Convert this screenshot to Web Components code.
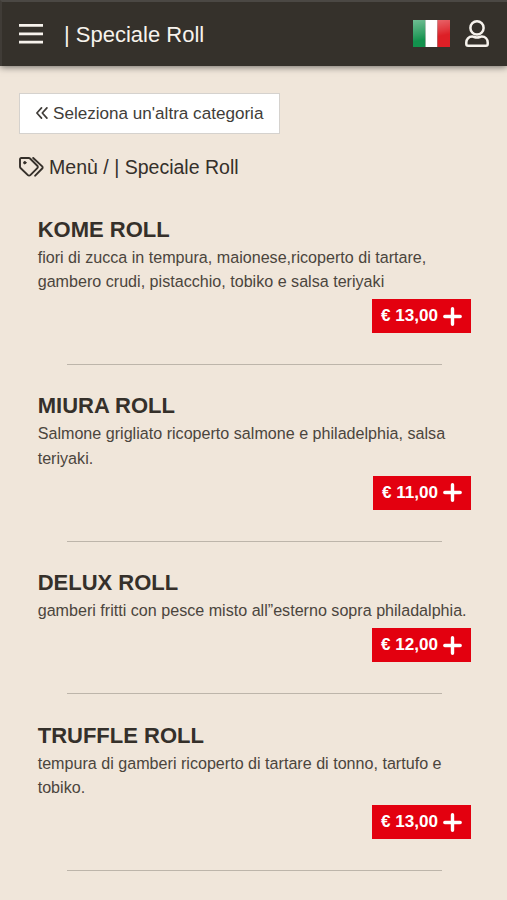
<!DOCTYPE html>
<html lang="it">
<head>
<meta charset="UTF-8">
<meta name="viewport" content="width=device-width, initial-scale=1">
<title>Speciale Roll</title>
<style>
    body {
        margin: 0;
        height: 900px;
        overflow: hidden;
        background: #f0e6da;
        color: #35302a;
        font-family: "Liberation Sans", Arial, sans-serif;
        --dark: #35312b;
        --accent: #e3000f;
    }
</style>
</head>
<body>
<menu-header>| Speciale Roll</menu-header>
<menu-page>
    <back-button slot="nav">Seleziona un'altra categoria</back-button>
    <menu-breadcrumb slot="nav">Menù / | Speciale Roll</menu-breadcrumb>
    <menu-item name="KOME ROLL" price="13,00">fiori di zucca in tempura, maionese,ricoperto di tartare, gambero crudi, pistacchio, tobiko e salsa teriyaki</menu-item>
    <menu-item name="MIURA ROLL" price="11,00">Salmone grigliato ricoperto salmone e philadelphia, salsa teriyaki.</menu-item>
    <menu-item name="DELUX ROLL" price="12,00">gamberi fritti con pesce misto all”esterno sopra philadalphia.</menu-item>
    <menu-item name="TRUFFLE ROLL" price="13,00">tempura di gamberi ricoperto di tartare di tonno, tartufo e tobiko.</menu-item>
</menu-page>

<script>
class MenuHeader extends HTMLElement {
    constructor() {
        super();
        this.attachShadow({ mode: 'open' });
    }

    connectedCallback() {
        this.shadowRoot.innerHTML = `
            <style>
                :host {
                    display: flex;
                    align-items: center;
                    box-sizing: border-box;
                    height: 66px;
                    padding: 0 18px 0 17px;
                    background: var(--dark);
                    border-top: 2px solid #4b4844;
                    border-left: 2px solid #403c37;
                    box-shadow: 0 1px 7px rgba(0, 0, 0, 0.55);
                    color: #f7f3ed;
                    font-size: 22px;
                }

                svg {
                    display: block;
                    flex: none;
                }

                .title {
                    flex: 1;
                    margin-left: 21px;
                    padding-top: 1px;
                    line-height: 26px;
                    white-space: nowrap;
                }

                .flag {
                    margin-top: -1px;
                }

                .user {
                    margin-left: 15px;
                    margin-top: -1px;
                }
            </style>
            <svg width="24" height="20" viewBox="0 0 24 20" fill="#f7f3ed">
                <path d="M0 0h24v2.8H0zM0 8.4h24v2.8H0zM0 16.8h24v2.8H0z"/>
            </svg>
            <div class="title"><slot></slot></div>
            <svg class="flag" width="37" height="27" viewBox="0 0 37 27">
                <defs>
                    <linearGradient id="shine" x1="0" y1="0" x2=".3" y2="1">
                        <stop offset="0" stop-color="#fff" stop-opacity=".4"/>
                        <stop offset=".55" stop-color="#fff" stop-opacity=".12"/>
                        <stop offset=".75" stop-color="#fff" stop-opacity="0"/>
                    </linearGradient>
                </defs>
                <path fill="#12924d" d="M0 0h12.5v27H0z"/>
                <path fill="#fff" d="M12.5 0h12v27h-12z"/>
                <path fill="#dd1f26" d="M24.5 0H37v27H24.5z"/>
                <path fill="url(#shine)" d="M0 0h37v27H0z"/>
            </svg>
            <svg class="user" width="24" height="27" viewBox="0 0 24 27" fill="none" stroke="#f7f3ed" stroke-width="2.5" stroke-linejoin="round">
                <circle cx="12" cy="7.9" r="6.6"/>
                <path d="M7.3 16.6C3.6 16.6 1.3 19.300 1.3 22.6v1.300c0 1.100.8 1.800 1.800 1.800h17.800c1 0 1.800-.7 1.800-1.800v-1.300c0-3.300-2.300-6-6-6-1.600 0-2.300 1-4.700 1s-3.100-1-4.700-1z"/>
            </svg>
        `;
    }
}

class MenuPage extends HTMLElement {
    constructor() {
        super();
        this.attachShadow({ mode: 'open' });
    }

    connectedCallback() {
        this.shadowRoot.innerHTML = `
            <style>
                :host {
                    display: block;
                    padding: 27px 19px 0;
                }

                nav {
                    display: flex;
                    flex-direction: column;
                    align-items: flex-start;
                    gap: 20px;
                }

                .items {
                    padding: 36.5px 17px 0 18.7px;
                }
            </style>
            <nav><slot name="nav"></slot></nav>
            <div class="items"><slot></slot></div>
        `;
    }
}

class BackButton extends HTMLElement {
    constructor() {
        super();
        this.attachShadow({ mode: 'open' });
    }

    connectedCallback() {
        this.shadowRoot.innerHTML = `
            <style>
                :host {
                    display: block;
                }

                button {
                    display: flex;
                    align-items: center;
                    box-sizing: border-box;
                    width: 261px;
                    height: 41px;
                    padding: 0 0 0 16px;
                    gap: 5px;
                    border: 1px solid #d5d2ce;
                    background: #fff;
                    color: #413d39;
                    font: 17.1px "Liberation Sans", Arial, sans-serif;
                    white-space: nowrap;
                }

                svg {
                    margin-top: -2px;
                }
            </style>
            <button>
                <svg width="12" height="12" viewBox="0 0 12 12" fill="none" stroke="#413d39" stroke-width="1.7" stroke-linecap="round" stroke-linejoin="round">
                    <path d="M5.500.9.9 6l4.600 5.100M10.900.9 6.300 6l4.600 5.100"/>
                </svg>
                <span><slot></slot></span>
            </button>
        `;
    }
}

class MenuBreadcrumb extends HTMLElement {
    constructor() {
        super();
        this.attachShadow({ mode: 'open' });
    }

    connectedCallback() {
        this.shadowRoot.innerHTML = `
            <style>
                :host {
                    display: flex;
                    align-items: center;
                    gap: 5px;
                    height: 26px;
                    font-size: 19.55px;
                    line-height: 26px;
                    white-space: nowrap;
                }
            </style>
            <svg width="25" height="20" viewBox="0 0 25 20" fill="none" stroke="#35302a" stroke-width="1.9" stroke-linecap="round" stroke-linejoin="round">
                <path d="M2.2 1h7.6c.5 0 .9.2 1.2.5l7.3 7.2c.7.7.7 1.7 0 2.4l-7 7c-.7.7-1.7.7-2.4 0L1.5 11c-.3-.3-.5-.8-.5-1.300V2.200C1 1.500 1.500 1 2.200 1z"/>
                <path d="M14.200 1l9 8.400c.6.600.6 1.500 0 2.100L16.200 18.700"/>
                <circle cx="5.800" cy="5.700" r="1.200" fill="#35302a" stroke-width="1"/>
            </svg>
            <span><slot></slot></span>
        `;
    }
}

class MenuItem extends HTMLElement {
    constructor() {
        super();
        this.attachShadow({ mode: 'open' });
    }

    connectedCallback() {
        this.name = this.getAttribute('name') || '';
        this.price = this.getAttribute('price') || '';

        this.shadowRoot.innerHTML = `
            <style>
                :host {
                    display: block;
                }

                h2 {
                    margin: 0 0 2px;
                    font-size: 22px;
                    line-height: 26px;
                    font-weight: bold;
                }

                p {
                    margin: 0;
                    color: #4b453d;
                    font-size: 16.13px;
                    line-height: 24.4px;
                }

                .row {
                    display: flex;
                    justify-content: flex-end;
                    margin-top: 5.7px;
                }

                button {
                    display: flex;
                    align-items: center;
                    gap: 5px;
                    box-sizing: border-box;
                    height: 34px;
                    padding: 0 9px;
                    border: 0;
                    background: var(--accent);
                    color: #fff;
                    font: bold 17.1px "Liberation Sans", Arial, sans-serif;
                    white-space: nowrap;
                }

                hr {
                    height: 1px;
                    margin: 31px 29px 28.4px;
                    border: 0;
                    background: #bdb5aa;
                }
            </style>
            <h2>${this.name}</h2>
            <p><slot></slot></p>
            <div class="row">
                <button>
                    <span>€ ${this.price}</span>
                    <svg width="19" height="19" viewBox="0 0 19 19" fill="none" stroke="#fff" stroke-width="3.4" stroke-linecap="round">
                        <path d="M9.5 1.8v15.4M1.8 9.5h15.4"/>
                    </svg>
                </button>
            </div>
            <hr>
        `;
    }
}

customElements.define('menu-header', MenuHeader);
customElements.define('menu-page', MenuPage);
customElements.define('back-button', BackButton);
customElements.define('menu-breadcrumb', MenuBreadcrumb);
customElements.define('menu-item', MenuItem);
</script>
</body>
</html>
